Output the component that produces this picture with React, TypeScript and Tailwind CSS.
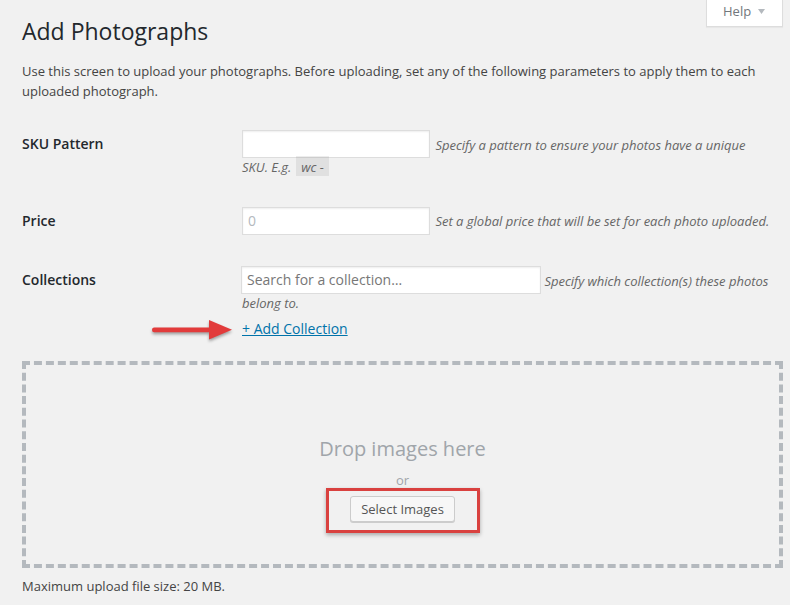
import React from 'react';

function RedArrow() {
    return (
        <svg
            className="absolute left-[-90px] top-[-1px] overflow-visible"
            width="84"
            height="26"
            viewBox="0 0 84 26"
            style={{ filter: 'drop-shadow(0 2px 1.5px rgba(0,0,0,0.35))' }}
        >
            <rect x="0" y="10.5" width="62" height="4.8" rx="2.2" fill="#e23b3b" />
            <polygon points="57,3 80,12.8 57,22.5" fill="#e23b3b" />
        </svg>
    );
}

function Row({ label, top, children }: { label: string; top: string; children: React.ReactNode }) {
    return (
        <div className={`flex ${top}`}>
            <div className="w-[220px] shrink-0 text-[14px] font-semibold leading-[28px] text-[#23282d]">{label}</div>
            <div className="flex-1 pr-[10px] leading-[19.5px]">{children}</div>
        </div>
    );
}

export default function App() {
    const inputCls =
        'inline-block h-[28px] border border-[#ddd] bg-white px-[5px] align-baseline text-[14px] text-[#32373c] shadow-[inset_0_1px_2px_rgba(0,0,0,0.07)] outline-none';

    return (
        <div className="min-h-screen w-[790px] bg-[#f1f1f1] font-['Open_Sans',sans-serif] text-[13px] text-[#444]">
            <div className="pl-[22px] pr-[7px]">
                <div className="flex items-start justify-between">
                    <h1 className="mt-[16px] text-[23px] font-normal leading-[30px] text-[#23282d]">Add Photographs</h1>
                    <button className="flex h-[27px] w-[77px] items-start gap-[7px] border border-t-0 border-[#ddd] bg-white pl-[16px] pt-[2px] text-[13px] leading-[19.5px] text-[#72777c] shadow-[0_1px_1px_rgba(0,0,0,0.04)]">
                        <span>Help</span>
                        <svg className="mt-[7px]" width="7" height="5" viewBox="0 0 7 5">
                            <polygon points="0,0 7,0 3.5,5" fill="#b4b9be" />
                        </svg>
                    </button>
                </div>

                <p className="mt-[16px] leading-[19.5px]">
                    Use this screen to upload your photographs. Before uploading, set any of the following parameters to apply them to each uploaded photograph.
                </p>

                <Row label="SKU Pattern" top="mt-[29px]">
                    <input type="text" className={`${inputCls} w-[188px]`} />{' '}
                    <span className="ml-[2px] italic text-[#666]">
                        Specify a pattern to ensure your photos have a unique SKU. E.g.
                    </span>
                    <code className="ml-[5px] bg-[rgba(0,0,0,0.07)] px-[5px] pt-[2px] font-['Open_Sans',sans-serif] italic text-[#666]">wc -</code>
                </Row>

                <Row label="Price" top="mt-[29px]">
                    <input type="text" placeholder="0" className={`${inputCls} w-[188px] placeholder:text-[#b4b9be]`} />{' '}
                    <span className="ml-[2px] italic text-[#666]">Set a global price that will be set for each photo uploaded.</span>
                </Row>

                <Row label="Collections" top="mt-[31px]">
                    <input
                        type="text"
                        placeholder="Search for a collection…"
                        className={`${inputCls} ml-[-1px] w-[300px] placeholder:text-[#777]`}
                    />{' '}
                    <span className="italic text-[#666]">Specify which collection(s) these photos belong to.</span>
                    <div className="relative mt-[5px] text-[14px] leading-[21px]">
                        <RedArrow />
                        <a href="#" className="text-[#0073aa] underline">+ Add Collection</a>
                    </div>
                </Row>

                <div className="mt-[22px] flex h-[207px] flex-col items-center border-4 border-dashed border-[#b4b9be] pt-[70px]">
                    <p className="text-[20px] leading-[28px] text-[#a0a5aa]">Drop images here</p>
                    <p className="mt-[8px] leading-[19.5px] text-[#a0a5aa]">or</p>
                    <div className="relative mt-[5px]">
                        <div className="absolute -bottom-[11px] -left-[24px] -right-[25px] -top-[8px] border-[3px] border-[#d9413f] shadow-[0_2px_4px_rgba(0,0,0,0.3)]" />
                        <button className="relative h-[26px] rounded-[3px] border border-[#ccc] bg-[#f7f7f7] px-[10px] text-[13px] leading-[24px] text-[#555] shadow-[0_1px_0_#ccc]">
                            Select Images
                        </button>
                    </div>
                </div>

                <p className="mt-[9px] leading-[19.5px]">Maximum upload file size: 20 MB.</p>
            </div>
        </div>
    );
}
